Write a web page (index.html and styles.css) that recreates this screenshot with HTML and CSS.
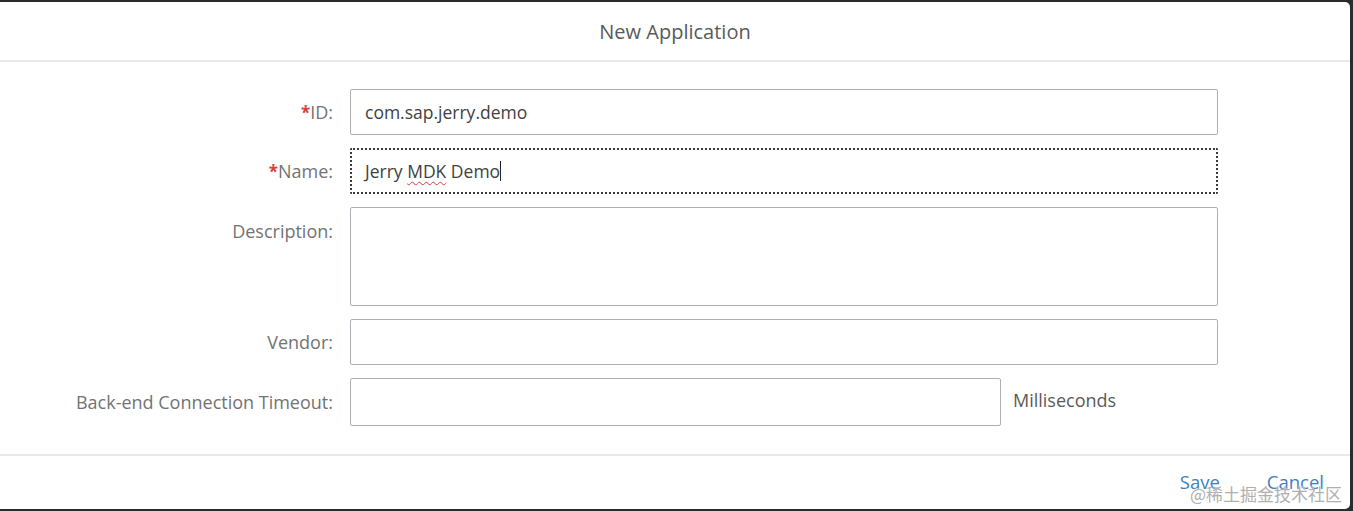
FILE: index.html
```html
<!DOCTYPE html>
<html lang="en">
<head>
    <meta charset="UTF-8">
    <title>New Application</title>
    <link rel="stylesheet" href="styles.css">
</head>
<body>
    <div class="dialog">
        <header class="head">New Application</header>

        <div class="form">
            <div class="row">
                <label class="lbl"><span class="req">*</span>ID:</label>
                <div class="field">com.sap.jerry.demo</div>
            </div>

            <div class="row">
                <label class="lbl"><span class="req">*</span>Name:</label>
                <div class="field focus">Jerry <span class="typo">MDK</span> Demo<span class="caret"></span></div>
            </div>

            <div class="row top">
                <label class="lbl">Description:</label>
                <div class="field area"></div>
            </div>

            <div class="row">
                <label class="lbl">Vendor:</label>
                <div class="field"></div>
            </div>

            <div class="row">
                <label class="lbl">Back-end Connection Timeout:</label>
                <div class="field short"></div>
                <span class="unit">Milliseconds</span>
            </div>
        </div>

        <footer class="foot">
            <button class="btn">Save</button>
            <button class="btn">Cancel</button>
        </footer>

        <div class="mark">@稀土掘金技术社区</div>
    </div>
</body>
</html>
```

FILE: styles.css
```css
body {
    margin: 0;
    padding: 0;
    background-color: #2b2b2b;
    font-family: "Open Sans", "Liberation Sans", sans-serif;
    overflow: hidden;
}

.dialog {
    position: relative;
    margin-top: 2px;
    width: 1350px;
    height: 507px;
    background: #fff;
    border-radius: 0 5px 5px 0;
    display: flex;
    flex-direction: column;
}

.head {
    height: 58px;
    border-bottom: 2px solid #e8e8e8;
    display: flex;
    align-items: center;
    justify-content: center;
    font-size: 20px;
    color: #5a5a5a;
}

.form {
    padding-top: 27px;
    flex: 1;
}

.row {
    display: flex;
    align-items: center;
    margin-bottom: 13px;
}

.row.top {
    align-items: flex-start;
}

.lbl {
    width: 333px;
    padding-right: 17px;
    text-align: right;
    font-size: 18px;
    color: #737373;
}

.row.top .lbl {
    padding-top: 12px;
}

.req {
    color: #e03a3a;
    font-weight: bold;
    font-size: 17px;
}

.field {
    box-sizing: border-box;
    width: 868px;
    height: 46px;
    border: 1px solid #aab0b6;
    border-radius: 2px;
    padding: 0 14px;
    display: flex;
    align-items: center;
    font-size: 17.5px;
    color: #3f3f3f;
    white-space: pre;
}

.field.focus {
    border: 2px dotted #3a3a3a;
    padding-left: 13px;
}

.field.area {
    height: 99px;
}

.field.short {
    width: 651px;
    height: 48px;
}

.typo {
    text-decoration: underline wavy #e03a3a;
    text-decoration-thickness: 1px;
    text-underline-offset: 3px;
}

.caret {
    display: inline-block;
    width: 1px;
    height: 20px;
    background: #222;
}

.unit {
    margin-left: 12px;
    font-size: 18px;
    color: #5a5a5a;
    margin-top: -4px;
}

.foot {
    height: 51px;
    border-top: 2px solid #e8e8e8;
    display: flex;
    justify-content: flex-end;
    align-items: center;
    padding-right: 26px;
    gap: 47px;
    margin-bottom: 2px;
}

.btn {
    all: unset;
    font-size: 18.5px;
    color: #3f7fc0;
}

.mark {
    position: absolute;
    right: 8px;
    bottom: 3px;
    font-family: "Noto Sans CJK SC", sans-serif;
    font-size: 17px;
    color: #b0b0b0;
    text-shadow: 0 0 2px #fff;
}
```
